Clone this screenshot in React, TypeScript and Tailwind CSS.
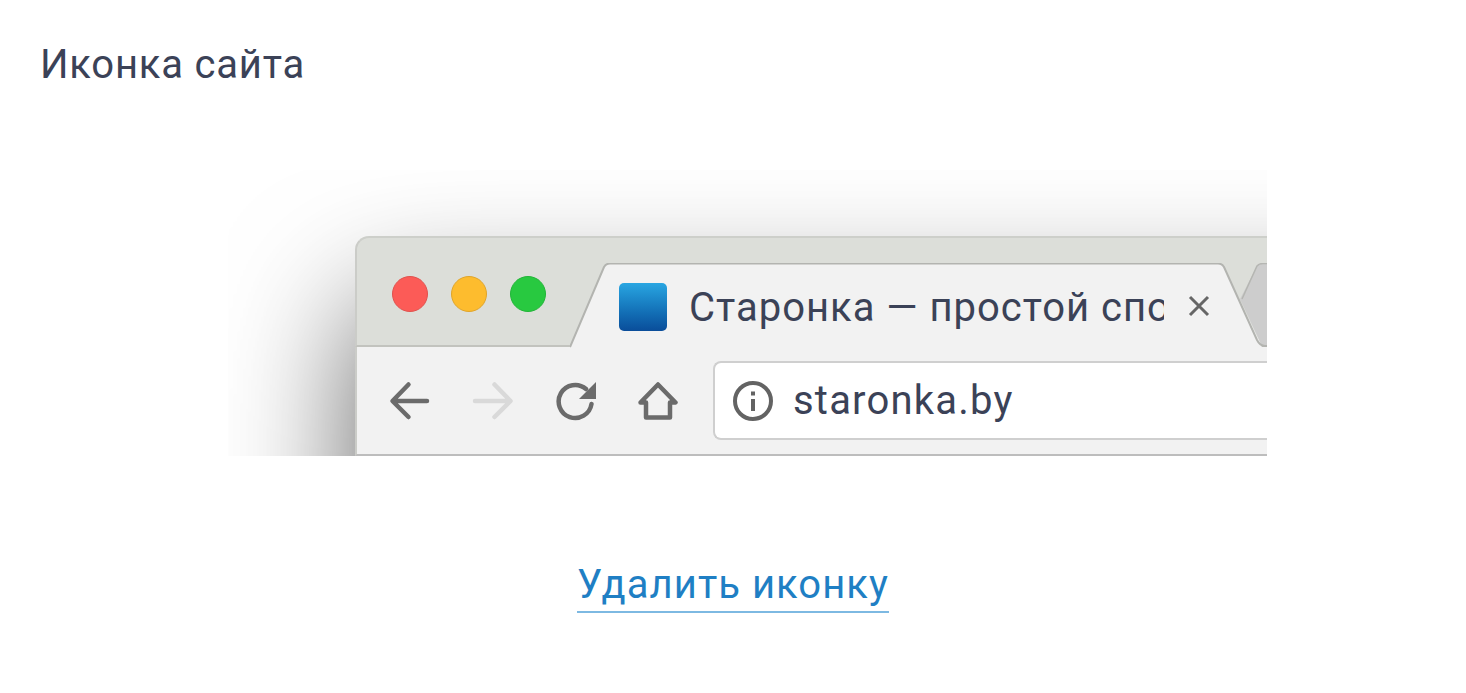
import React from 'react';

const BackIcon = ({ color }: { color: string }) => (
  <svg width="42" height="40" viewBox="0 0 42 40" fill="none" stroke={color} strokeWidth="4.500" strokeLinecap="round" strokeLinejoin="round">
    <path d="M38 20H4M19.500 3.500L3.500 20L19.500 36" />
  </svg>
);

const ForwardIcon = ({ color }: { color: string }) => (
  <svg width="42" height="40" viewBox="0 0 42 40" fill="none" stroke={color} strokeWidth="4.500" strokeLinecap="round" strokeLinejoin="round">
    <path d="M3 20H38M22.500 3.500L38.500 20L22.500 36" />
  </svg>
);

const ReloadIcon = () => (
  <svg width="42" height="40" viewBox="0 0 42 40" fill="none">
    <path d="M36.500 23A16.500 16.500 0 1 1 31 8" stroke="#6b6b6b" strokeWidth="4.500" strokeLinecap="round" />
    <path d="M41 1V18H24Z" fill="#6b6b6b" />
  </svg>
);

const HomeIcon = () => (
  <svg width="40" height="38" viewBox="0 0 40 38" fill="none" stroke="#6b6b6b" strokeWidth="4.500" strokeLinejoin="round" strokeLinecap="round">
    <path d="M2.500 20.500L20 2.500L37.500 20.500H32V35.500H8V20.500Z" />
  </svg>
);

const InfoIcon = () => (
  <svg width="40" height="40" viewBox="0 0 40 40" fill="none">
    <circle cx="20" cy="20" r="18" stroke="#636363" strokeWidth="4" />
    <rect x="18" y="18" width="4" height="12" fill="#636363" />
    <rect x="18" y="10.500" width="4" height="4" fill="#636363" />
  </svg>
);

const TabShape = () => (
  <svg className="absolute left-0 top-0" width="700" height="86" viewBox="0 0 700 86" fill="none">
    <path d="M670 36L687 3Q689 0.500 693 0.500H700V83H692Z" fill="#cdcdcd" />
    <path d="M672 36L687 3Q689 0.500 693 0.500H700" stroke="#b5b6b2" strokeWidth="1.500" />
    <path d="M0 84L34 4Q36 0.500 40 0.500H648Q652 0.500 654 4L692 84Z" fill="#f2f2f2" />
    <path d="M0 84L34 4Q36 0.500 40 0.500H648Q652 0.500 654 4L687 77Q690 83 695 83H700" stroke="#b3b4b0" strokeWidth="2" />
  </svg>
);

export default function App() {
  return (
    <div className="h-[693px] w-full overflow-hidden bg-white font-['Roboto',sans-serif]">
      <h2 className="pl-10 pt-[41px] text-[40px] font-normal leading-[48px] tracking-[0.8px] text-[#3b4257]">Иконка сайта</h2>

      {/* Browser preview, clipped on the right and at the bottom */}
      <div className="ml-[228px] mt-[81px] h-[286px] w-[1039px] overflow-hidden">
        <div className="ml-[127px] mt-[66px] h-[520px] w-[1200px] rounded-t-[14px] bg-[#f2f2f2] shadow-[0_70px_130px_rgba(0,0,0,0.6)]">
          <div className="flex h-[111px] items-start rounded-t-[14px] border-x-2 border-t-2 border-b-2 border-x-[#cbccc8] border-t-[#cdcfca] border-b-[#c2c3be] bg-[#dcded9] pl-[35px]">
            <div className="mt-[38px] flex gap-[23px]">
              <span className="h-9 w-9 rounded-full border border-[#e0524e] bg-[#fc5b57]" />
              <span className="h-9 w-9 rounded-full border border-[#e0a52a] bg-[#fdbc2e]" />
              <span className="h-9 w-9 rounded-full border border-[#22b538] bg-[#28c940]" />
            </div>
            <div className="relative ml-[24px] mt-[25px] h-[86px] w-[700px]">
              <TabShape />
              <div className="relative flex h-full items-start pl-[49px] pt-[20px]">
                <span className="h-12 w-12 rounded-[5px] bg-gradient-to-b from-[#29a6e2] to-[#0a4d9a]" />
                <div className="ml-[22px] mt-[1px] w-[475px] overflow-hidden whitespace-nowrap text-[40px] leading-[48px] tracking-[1px] text-[#3b4257]">
                  Старонка — простой способ
                </div>
                <svg className="ml-[24px] mt-[12px]" width="22" height="22" viewBox="0 0 22 22" fill="none" stroke="#666666" strokeWidth="3">
                  <path d="M2 2L20 20M20 2L2 20" />
                </svg>
              </div>
            </div>
          </div>

          <div className="flex h-[109px] items-center border-x-2 border-b-2 border-x-[#cbccc8] border-b-[#bdbdbd] pl-[32px]">
            <BackIcon color="#6b6b6b" />
            <div className="ml-[41px]"><ForwardIcon color="#d9d9d9" /></div>
            <div className="ml-[41px]"><ReloadIcon /></div>
            <div className="ml-[41px]"><HomeIcon /></div>
            <div className="ml-[35px] flex h-[79px] w-[700px] items-center rounded-l-[8px] border-2 border-r-0 border-[#cfcfcf] bg-white pl-[18px]">
              <InfoIcon />
              <span className="ml-[20px] text-[40px] leading-[48px] tracking-[1.2px] text-[#3b4257]">staronka.by</span>
            </div>
          </div>
        </div>
      </div>

      <div className="mt-[106px] flex justify-center">
        <a className="border-b-2 border-[#7db9e2] pb-[4px] text-[40px] leading-[45px] tracking-[1.05px] text-[#1f7fc4]">Удалить иконку</a>
      </div>
    </div>
  );
}
